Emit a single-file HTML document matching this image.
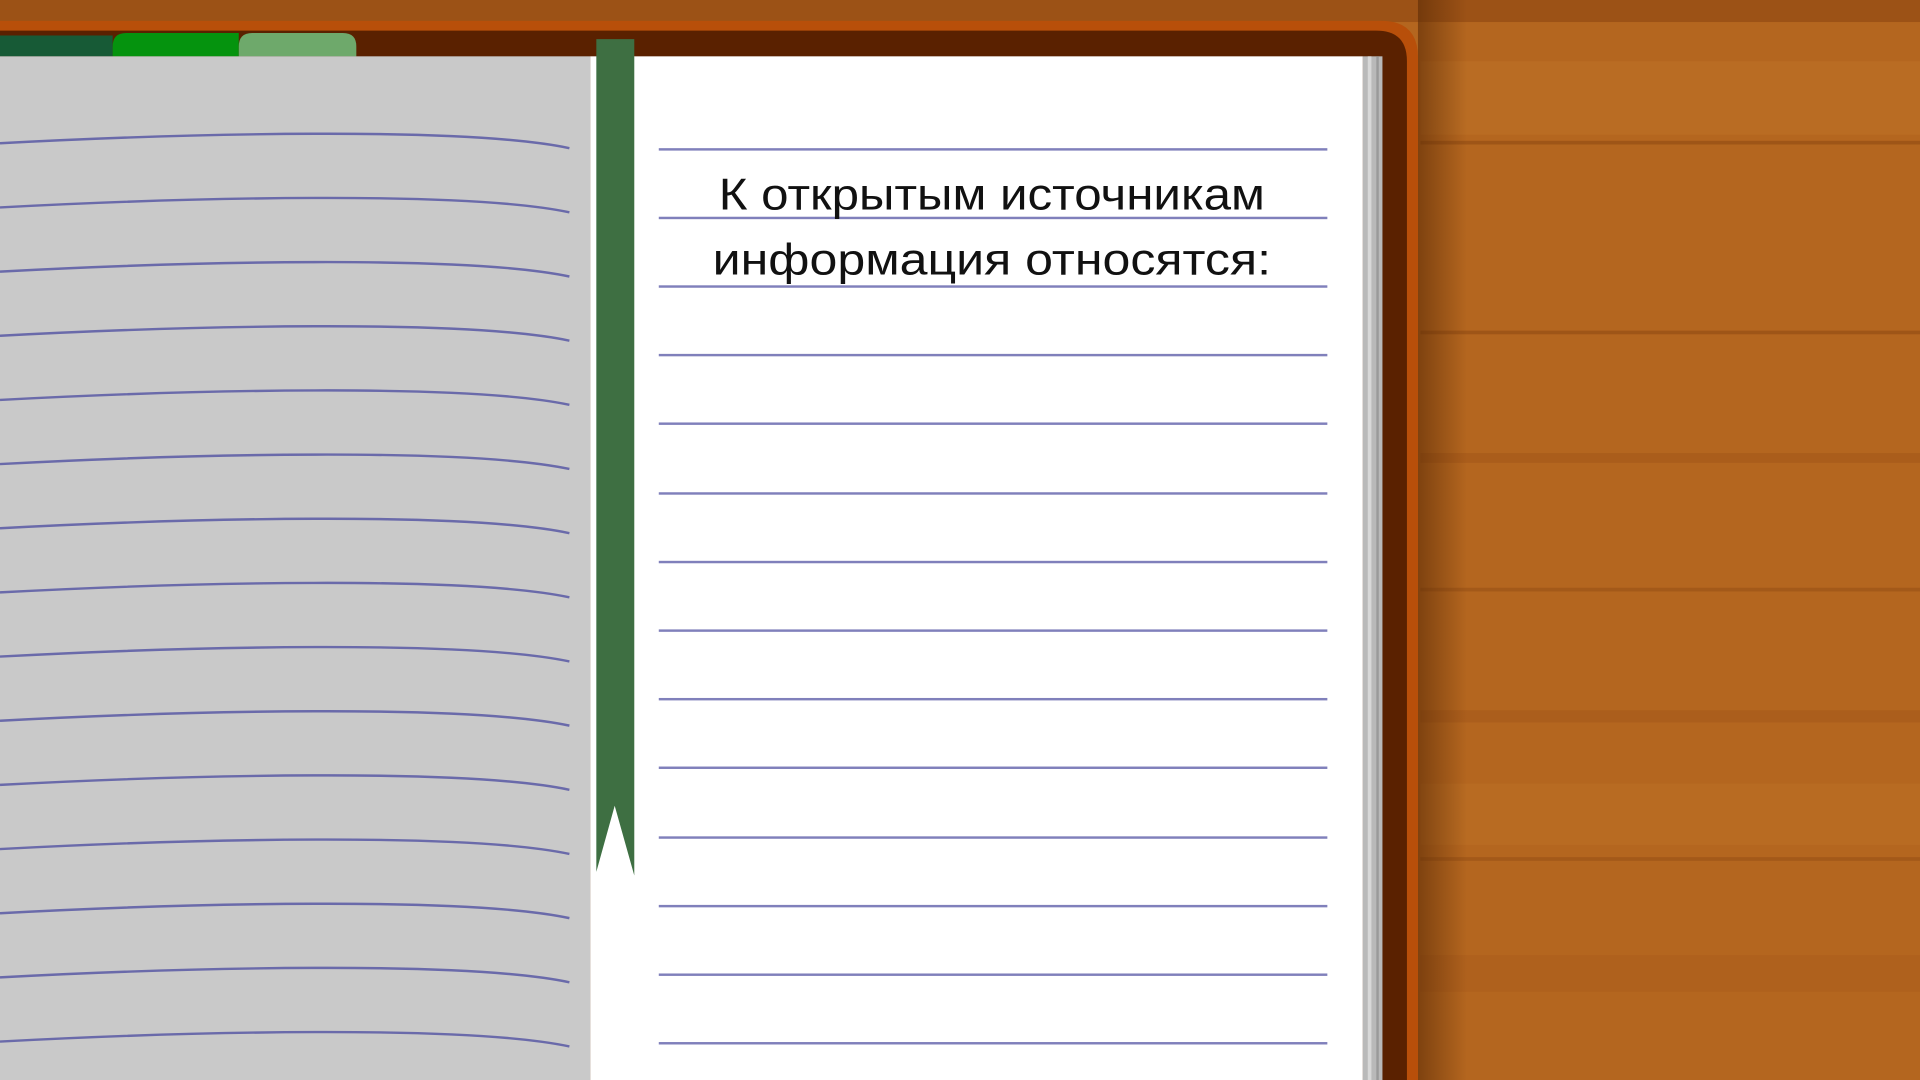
<!DOCTYPE html>
<html><head><meta charset="utf-8"><style>
html,body{margin:0;padding:0;width:1920px;height:1080px;overflow:hidden;background:#b8681f}
svg{display:block}
</style></head><body>
<svg width="1920" height="1080" viewBox="0 0 1568 882" preserveAspectRatio="none" xmlns="http://www.w3.org/2000/svg">
<defs>
<linearGradient id="shadow" x1="0" x2="1" y1="0" y2="0">
<stop offset="0" stop-color="#5a2a05" stop-opacity="0.6"/><stop offset="1" stop-color="#5a2a05" stop-opacity="0"/>
</linearGradient>
</defs>
<rect width="1568" height="882" fill="#b4661f"/>
<rect x="0" y="0" width="1568" height="18" fill="#9c5216"/>
<rect x="1160" y="50" width="408" height="60" fill="#bd6f27" opacity="0.6"/>
<rect x="1160" y="115" width="408" height="3" fill="#7e3b0c" opacity="0.4"/>
<rect x="1160" y="270" width="408" height="3" fill="#7e3b0c" opacity="0.4"/>
<rect x="1160" y="370" width="408" height="8" fill="#9a4f16" opacity="0.4"/>
<rect x="1160" y="480" width="408" height="3" fill="#7e3b0c" opacity="0.3"/>
<rect x="1160" y="580" width="408" height="10" fill="#9a4f16" opacity="0.35"/>
<rect x="1160" y="640" width="408" height="50" fill="#bf7229" opacity="0.4"/>
<rect x="1160" y="700" width="408" height="3" fill="#7e3b0c" opacity="0.3"/>
<rect x="1160" y="780" width="408" height="30" fill="#a85a1b" opacity="0.4"/>
<rect x="1158" y="0" width="40" height="882" fill="url(#shadow)"/>
<!-- cover -->
<path d="M0,17 H1128 Q1158,17 1158,47 V882 H0 Z" fill="#b84f0a"/>
<path d="M0,25 H1124 Q1149,25 1149,50 V882 H0 Z" fill="#5a2100"/>
<!-- tabs -->
<path d="M0,29 H92 V46 H0 Z" fill="#175a36"/>
<path d="M92,46 V38 Q92,27 103,27 H195 V46 Z" fill="#05930e"/>
<path d="M195,46 V38 Q195,27 206,27 H280 Q291,27 291,38 V46 Z" fill="#6ea96b"/>
<!-- pages -->
<rect x="0" y="46" width="482" height="836" fill="#c9c9c9"/>
<rect x="482" y="46" width="631" height="836" fill="#ffffff"/>
<rect x="1113" y="46" width="16" height="836" fill="#b9b9b9"/>
<rect x="1117" y="46" width="3" height="836" fill="#d8d8d8"/>
<rect x="1124" y="46" width="2" height="836" fill="#9a9a9a"/>
<!-- left lines -->
<g fill="none" stroke="#6a6aaa" stroke-width="2">
<path id="ll" d="M0,117 C150,109 380,103 465,121"/>
<use href="#ll" y="52.4"/><use href="#ll" y="104.8"/><use href="#ll" y="157.2"/><use href="#ll" y="209.6"/>
<use href="#ll" y="262"/><use href="#ll" y="314.4"/><use href="#ll" y="366.8"/><use href="#ll" y="419.2"/>
<use href="#ll" y="471.6"/><use href="#ll" y="524"/><use href="#ll" y="576.4"/><use href="#ll" y="628.8"/>
<use href="#ll" y="681.2"/><use href="#ll" y="733.6"/>
</g>
<!-- right lines -->
<g fill="#8080bb">
<rect x="538" y="121" width="546" height="2"/><rect x="538" y="177" width="546" height="2"/>
<rect x="538" y="233" width="546" height="2"/><rect x="538" y="289" width="546" height="2"/>
<rect x="538" y="345" width="546" height="2"/><rect x="538" y="402" width="546" height="2"/>
<rect x="538" y="458" width="546" height="2"/><rect x="538" y="514" width="546" height="2"/>
<rect x="538" y="570" width="546" height="2"/><rect x="538" y="626" width="546" height="2"/>
<rect x="538" y="683" width="546" height="2"/><rect x="538" y="739" width="546" height="2"/>
<rect x="538" y="795" width="546" height="2"/><rect x="538" y="851" width="546" height="2"/>
</g>
<!-- bookmark -->
<path d="M487,32 H518 V715 L502,658 L487,712 Z" fill="#3e6f42"/>
<!-- text -->
<g font-family="'Liberation Sans','DejaVu Sans',sans-serif" font-size="36" fill="#111" text-anchor="middle">
<text x="810" y="171" textLength="446" lengthAdjust="spacingAndGlyphs">К открытым источникам</text>
<text x="810" y="224" textLength="456" lengthAdjust="spacingAndGlyphs">информация относятся:</text>
</g>
</svg>
</body></html>
